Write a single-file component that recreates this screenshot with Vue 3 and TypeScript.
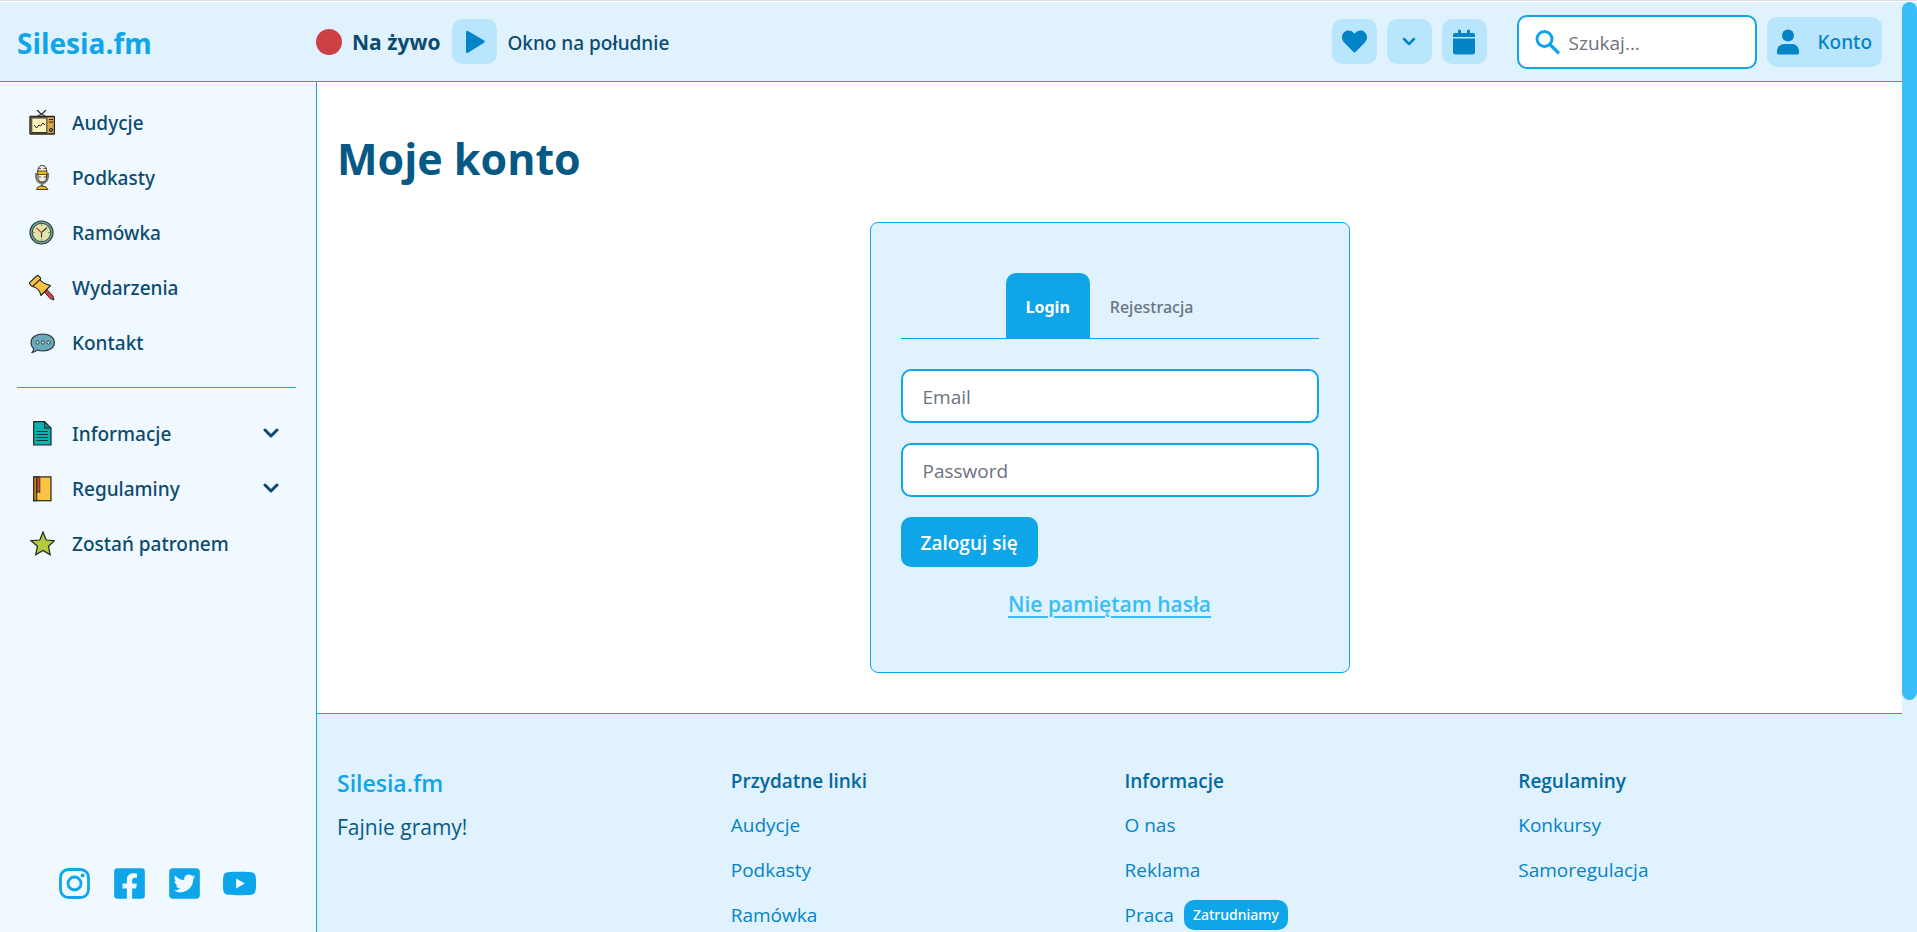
<script setup lang="ts">
import { ref } from 'vue'

interface NavItem {
  label: string
  icon: string
  expandable?: boolean
}

interface FooterLink {
  label: string
  badge?: string
}

interface FooterColumn {
  title: string
  links: FooterLink[]
}

const mainNav: NavItem[] = [
  { label: 'Audycje', icon: 'tv' },
  { label: 'Podkasty', icon: 'mic' },
  { label: 'Ramówka', icon: 'clock' },
  { label: 'Wydarzenia', icon: 'pin' },
  { label: 'Kontakt', icon: 'chat' },
]

const moreNav: NavItem[] = [
  { label: 'Informacje', icon: 'doc', expandable: true },
  { label: 'Regulaminy', icon: 'book', expandable: true },
  { label: 'Zostań patronem', icon: 'star' },
]

const navGroups = [mainNav, moreNav]

const footerColumns: FooterColumn[] = [
  {
    title: 'Przydatne linki',
    links: [{ label: 'Audycje' }, { label: 'Podkasty' }, { label: 'Ramówka' }],
  },
  {
    title: 'Informacje',
    links: [{ label: 'O nas' }, { label: 'Reklama' }, { label: 'Praca', badge: 'Zatrudniamy' }],
  },
  {
    title: 'Regulaminy',
    links: [{ label: 'Konkursy' }, { label: 'Samoregulacja' }],
  },
]

const activeTab = ref<'login' | 'register'>('login')
const search = ref('')
const email = ref('')
const password = ref('')
</script>

<template>
  <div class="window">
    <div class="app">
      <header class="topbar">
        <a class="brand" href="#">Silesia.fm</a>

        <div class="live">
          <span class="live-dot"></span>
          <strong class="live-label">Na żywo</strong>
          <button class="icon-btn" type="button" aria-label="Odtwórz">
            <svg width="26" height="26" viewBox="0 0 26 26">
              <path d="M4 3.200Q4 1 6 2L22 11.500Q23.500 12.600 22 13.700L6 23.700Q4 24.600 4 22.500Z" fill="currentColor" />
            </svg>
          </button>
          <span class="live-title">Okno na południe</span>
        </div>

        <div class="actions">
          <button class="icon-btn" type="button" aria-label="Ulubione">
            <svg width="25" height="25" viewBox="0 0 512 512">
              <path fill="currentColor" d="M462.300 62.600C407.500 15.900 326 24.300 275.700 76.200L256 96.500l-19.700-20.300C186.100 24.300 104.500 15.900 49.700 62.600c-62.800 53.600-66.100 149.800-9.900 207.900l193.500 199.800c12.500 12.900 32.800 12.900 45.300 0l193.500-199.800c56.300-58.100 53-154.300-9.800-207.900z" />
            </svg>
          </button>
          <button class="icon-btn" type="button" aria-label="Więcej">
            <svg width="14" height="10" viewBox="0 0 14 10">
              <path d="M2 2L7 7L12 2" fill="none" stroke="currentColor" stroke-width="2.500" stroke-linecap="round" stroke-linejoin="round" />
            </svg>
          </button>
          <button class="icon-btn" type="button" aria-label="Kalendarz">
            <svg width="24" height="26" viewBox="0 0 24 26">
              <path fill="currentColor" d="M1 8V6Q1 4 3 4H6V2Q6 .500 7.500 .500T9 2V4H15V2Q15 .500 16.500 .500T18 2V4H21Q23 4 23 6V8ZM1 9.500H23V23Q23 25.500 20.500 25.500H3.500Q1 25.500 1 23Z" />
            </svg>
          </button>
          <label class="search">
            <svg width="26" height="26" viewBox="0 0 26 26">
              <circle cx="9.500" cy="10" r="7.500" fill="none" stroke="currentColor" stroke-width="3" />
              <path d="M15 15.500L23 23.500" stroke="currentColor" stroke-width="3.200" stroke-linecap="round" />
            </svg>
            <input v-model="search" type="search" placeholder="Szukaj..." aria-label="Szukaj" />
          </label>
          <button class="account" type="button">
            <svg width="22" height="26" viewBox="0 0 22 26">
              <circle cx="11" cy="6.500" r="6" fill="currentColor" />
              <path fill="currentColor" d="M0 23C0 17.500 3.500 15 7.500 15H14.500C18.500 15 22 17.500 22 23V24Q22 25.500 20.500 25.500H1.500Q0 25.500 0 24Z" />
            </svg>
            Konto
          </button>
        </div>
      </header>

      <div class="body">
        <aside class="sidebar">
          <nav>
            <ul v-for="(group, g) in navGroups" :key="g" class="nav-group">
              <li v-for="item in group" :key="item.label">
                <a class="nav-link" href="#">
                  <svg v-if="item.icon === 'tv'" width="26" height="26" viewBox="0 0 26 26" stroke="#222">
                    <path d="M8 0L12.500 4.500L17 0M9 6Q12.500 3 16 6" fill="none" stroke-width="1.200" />
                    <rect x="1" y="6.500" width="24.500" height="17.500" rx=".5" fill="#d9a648" stroke-width="1.400" />
                    <rect x="2.800" y="8" width="15" height="14.500" fill="#fbf3bd" stroke-width=".9" />
                    <path d="M5 15L7.500 18L10 15L11.500 16L14 13L16 15M20 9.500H24M20 12H24" fill="none" stroke-width="1" />
                    <circle cx="22" cy="20" r="1.600" fill="#8a8a32" stroke-width="1" />
                  </svg>
                  <svg v-else-if="item.icon === 'mic'" width="26" height="26" viewBox="0 1 26 26" stroke="#333">
                    <path d="M7 9V13Q8 19 13 19T19 13V9" fill="none" stroke="#777" stroke-width="2" />
                    <path d="M13 19V23" stroke="#777" stroke-width="2.500" />
                    <rect x="9" y="1.500" width="8.500" height="16.500" rx="4.200" fill="#f6ead0" />
                    <rect x="8.500" y="7" width="9.500" height="3.500" fill="#f0b80c" stroke-width=".8" />
                    <path d="M10 4.500H12M14.500 4.500H17M10 13H12M14.500 13H17" stroke-width=".8" />
                    <path d="M7.500 25.500Q8 22 13 22T19 25.500Z" fill="#f3b90a" stroke-width=".9" />
                  </svg>
                  <svg v-else-if="item.icon === 'clock'" width="26" height="26" viewBox="0 0 26 26" stroke="#333">
                    <circle cx="12.500" cy="12.500" r="11.500" fill="#64ad9b" stroke-width="1.200" />
                    <circle cx="12.500" cy="12.500" r="9.200" fill="#e2e2aa" stroke-width=".9" />
                    <path d="M12.500 12.500L18 7.500M12.500 12.500V17.500M12.500 4.500V5.500M12.500 19.500V20.500M4.500 12.500H5.500M19.500 12.500H20.500" fill="none" stroke-width="1.100" />
                    <path d="M12.500 12.500L7.500 8" stroke="#d34c38" stroke-width="1.300" />
                  </svg>
                  <svg v-else-if="item.icon === 'pin'" width="26" height="26" viewBox="0 0 26 26" stroke="#222" stroke-linejoin="round">
                    <path d="M15.500 17L18 14.500L24 21L25 25L21 23.500Z" fill="#d8423d" stroke-width=".9" />
                    <path d="M3.500 11.500L10.500 4Q13 8.500 21.500 10.500L12 20.500Q10.500 13 3.500 11.500Z" fill="#fcc343" stroke-width="1.100" />
                    <rect x="0" y="3.400" width="12" height="4.800" rx="1.200" transform="rotate(-43 6 5.800)" fill="#fcc343" stroke-width="1.100" />
                  </svg>
                  <svg v-else-if="item.icon === 'chat'" width="26" height="26" viewBox="0 0 26 26" stroke="#333">
                    <path d="M14 4C20 4 25.300 7 25.300 12.500S20 21 14 21C11 21 9.500 20.500 8 20Q6 22.500 3.200 22.500Q5 20.500 4.500 18.500Q2 16 2 12.500C2 7 7.500 4 14 4Z" fill="#67aabe" stroke-width="1.200" />
                    <g fill="#e8e3c0" stroke-width=".9">
                      <circle cx="8.500" cy="12.500" r="1.600" />
                      <circle cx="14" cy="12.500" r="1.600" />
                      <circle cx="19.500" cy="12.500" r="1.600" />
                    </g>
                  </svg>
                  <svg v-else-if="item.icon === 'doc'" width="26" height="26" viewBox="0 0 26 26" stroke="#222">
                    <path d="M4.700 .700H15.500L22 7V24H4.700Z" fill="#07b3ae" stroke-width="1.200" />
                    <path d="M15.500 .700V7H22Z" fill="#078f8c" stroke-width="1" />
                    <path d="M7.500 10.500H19M7.500 13.500H19M7.500 16.500H19M7.500 19.500H19" stroke-width=".9" />
                  </svg>
                  <svg v-else-if="item.icon === 'book'" width="26" height="26" viewBox="0 0 26 26" stroke="#222">
                    <rect x="4.700" y=".9" width="17.300" height="23.800" fill="#fcc343" stroke-width="1.200" />
                    <rect x="4.700" y=".9" width="3" height="23.800" fill="#c98408" stroke-width="1" />
                    <path d="M8 .9H10.800V17L9.400 15L8 17Z" fill="#d9483b" stroke-width=".8" />
                  </svg>
                  <svg v-else width="26" height="26" viewBox="0 0 26 26" stroke="#222">
                    <path d="M14 1L17.200 9L25.500 9.700L19.500 15.300L21.200 23.800L14 19.500L6.600 23.800L8.500 15.300L2 9.700L10.800 9Z" fill="#b4cb40" stroke-width="1.200" />
                  </svg>
                  <span>{{ item.label }}</span>
                  <svg v-if="item.expandable" class="chevron" width="16" height="12" viewBox="0 0 16 12">
                    <path d="M2 2L8 8L14 2" fill="none" stroke="currentColor" stroke-width="3" stroke-linecap="round" stroke-linejoin="round" />
                  </svg>
                </a>
              </li>
            </ul>
          </nav>

          <div class="social">
            <a href="#" aria-label="Instagram">
              <svg width="35" height="35" viewBox="0 0 35 35">
                <rect x="3.500" y="3.500" width="28" height="28" rx="8" fill="none" stroke="currentColor" stroke-width="2.800" />
                <circle cx="17.500" cy="17.500" r="6.500" fill="none" stroke="currentColor" stroke-width="2.800" />
                <circle cx="25.600" cy="9.400" r="1.900" fill="currentColor" />
              </svg>
            </a>
            <a href="#" aria-label="Facebook">
              <svg width="35" height="35" viewBox="-32 0 512 512">
                <path fill="currentColor" d="M400 32H48A48 48 0 0 0 0 80v352a48 48 0 0 0 48 48h137.250V327.690h-63V256h63v-54.640c0-62.150 37-96.480 93.670-96.480 27.140 0 55.520 4.840 55.520 4.840v61h-31.270c-30.810 0-40.420 19.120-40.420 38.730V256h68.780l-11 71.690h-57.780V480H400a48 48 0 0 0 48-48V80a48 48 0 0 0-48-48z" />
              </svg>
            </a>
            <a href="#" aria-label="Twitter">
              <svg width="35" height="35" viewBox="-32 0 512 512">
                <path fill="currentColor" d="M400 32H48C21.500 32 0 53.500 0 80v352c0 26.500 21.500 48 48 48h352c26.500 0 48-21.500 48-48V80c0-26.500-21.500-48-48-48zm-48.900 158.800c.2 2.800.2 5.700.2 8.500 0 86.700-66 186.600-186.600 186.600-37.200 0-71.700-10.800-100.700-29.400 5.300.6 10.400.8 15.800.8 30.700 0 58.900-10.400 81.400-28-28.800-.6-53-19.500-61.300-45.500 10.100 1.500 19.200 1.500 29.600-1.200-30-6.100-52.500-32.500-52.500-64.400v-.8c8.700 4.900 18.900 7.900 29.600 8.300a65.447 65.447 0 0 1-29.200-54.600c0-12.200 3.200-23.400 8.900-33.100 32.300 39.800 80.800 65.800 135.200 68.600-9.300-44.500 24-80.600 64-80.600 18.900 0 35.900 7.900 47.900 20.700 14.800-2.800 29-8.300 41.600-15.800-4.900 15.200-15.200 28-28.800 36.100 13.200-1.400 26-5.100 37.800-10.200-8.900 13.100-20.100 24.700-32.900 34z" />
              </svg>
            </a>
            <a href="#" aria-label="YouTube">
              <svg width="35" height="35" viewBox="0 -32 576 576">
                <path fill="currentColor" d="M549.655 124.083c-6.281-23.650-24.787-42.276-48.284-48.597C458.781 64 288 64 288 64S117.220 64 74.629 75.486c-23.497 6.322-42.003 24.947-48.284 48.597-11.412 42.867-11.412 132.305-11.412 132.305s0 89.438 11.412 132.305c6.281 23.650 24.787 41.500 48.284 47.821C117.220 448 288 448 288 448s170.780 0 213.371-11.486c23.497-6.321 42.003-24.171 48.284-47.821 11.412-42.867 11.412-132.305 11.412-132.305s0-89.438-11.412-132.305zm-317.510 213.508V175.185l142.739 81.205-142.739 81.201z" />
              </svg>
            </a>
          </div>
        </aside>

        <div class="content">
          <main class="main">
            <h1>Moje konto</h1>
            <section class="card">
              <div class="tabs" role="tablist">
                <button
                  class="tab"
                  :class="{ active: activeTab === 'login' }"
                  type="button"
                  role="tab"
                  :aria-selected="activeTab === 'login'"
                  @click="activeTab = 'login'"
                >Login</button>
                <button
                  class="tab"
                  :class="{ active: activeTab === 'register' }"
                  type="button"
                  role="tab"
                  :aria-selected="activeTab === 'register'"
                  @click="activeTab = 'register'"
                >Rejestracja</button>
              </div>
              <form class="form" @submit.prevent>
                <input v-model="email" class="field" type="email" placeholder="Email" aria-label="Email" />
                <input v-model="password" class="field" type="password" placeholder="Password" aria-label="Password" />
                <button class="submit" type="submit">Zaloguj się</button>
                <a class="forgot" href="#">Nie pamiętam hasła</a>
              </form>
            </section>
          </main>

          <footer class="footer">
            <div class="about">
              <strong>Silesia.fm</strong>
              <p>Fajnie gramy!</p>
            </div>
            <div v-for="column in footerColumns" :key="column.title" class="column">
              <h2>{{ column.title }}</h2>
              <ul>
                <li v-for="link in column.links" :key="link.label">
                  <a href="#">{{ link.label }}</a>
                  <span v-if="link.badge" class="badge">{{ link.badge }}</span>
                </li>
              </ul>
            </div>
          </footer>
        </div>
      </div>
    </div>
    <div class="scroll-track" aria-hidden="true"><div class="scroll-thumb"></div></div>
  </div>
</template>

<style>
html,
body {
  margin: 0;
  overflow: hidden;
}
</style>

<style scoped>
* {
  box-sizing: border-box;
}

.window {
  display: flex;
  height: 100vh;
  padding-top: 1px;
  border-top: 1px solid #d9dde1;
  overflow: hidden;
  background: #fff;
  color: #0c4a6e;
  font-family: 'Open Sans', 'Noto Sans', sans-serif;
  font-size: 19px;
  line-height: 30px;
}

.app {
  display: flex;
  flex: 1;
  flex-direction: column;
  min-width: 0;
}

button,
input {
  font: inherit;
}

button {
  padding: 0;
  border: 0;
  cursor: pointer;
}

a {
  color: inherit;
  text-decoration: none;
}

svg {
  flex: none;
  display: block;
}

ul {
  margin: 0;
  padding: 0;
  list-style: none;
}

.topbar {
  display: flex;
  flex: none;
  align-items: center;
  height: 80px;
  padding: 0 20px 0 17px;
  border-bottom: 1px solid #0ea5e9;
  background: #e0f2fe;
}

.brand {
  width: 299px;
  padding-top: 2px;
  color: #0ea5e9;
  font-size: 28px;
  font-weight: 700;
}

.live,
.actions {
  display: flex;
  align-items: center;
  gap: 10px;
}

.live-dot {
  width: 26px;
  height: 26px;
  border-radius: 50%;
  background: #cb4144;
}

.live-label {
  margin-right: 2px;
  font-size: 21px;
  font-weight: 700;
}

/* The medium weight comes from Noto Sans, which ships one. */
.live-title,
.account,
.nav-link,
.tab,
.badge {
  font-family: 'Noto Sans', 'Open Sans', sans-serif;
  font-weight: 500;
}

.live-title {
  padding-top: 2px;
}

.icon-btn {
  display: flex;
  align-items: center;
  justify-content: center;
  width: 45px;
  height: 45px;
  border-radius: 10px;
  background: #bae6fd;
  color: #0284c7;
}

.actions {
  margin-left: auto;
}

.search {
  display: flex;
  align-items: center;
  gap: 8px;
  width: 240px;
  height: 54px;
  margin-left: 20px;
  padding: 0 16px;
  border: 2px solid #0ea5e9;
  border-radius: 10px;
  background: #fff;
  color: #0ea5e9;
}

.search input {
  flex: 1;
  min-width: 0;
  padding: 2px 0 0;
  border: 0;
  outline: 0;
  background: none;
}

::placeholder {
  color: #6b7280;
  opacity: 1;
}

.account {
  display: flex;
  align-items: center;
  gap: 19px;
  height: 50px;
  padding: 0 10px;
  border-radius: 10px;
  background: #bae6fd;
  color: #0284c7;
}

.body {
  display: flex;
  flex: 1;
  min-height: 0;
}

.sidebar {
  display: flex;
  flex: none;
  flex-direction: column;
  justify-content: space-between;
  width: 317px;
  padding: 13px 20px 31px 17px;
  border-right: 1px solid #0ea5e9;
  background: #f0f9ff;
}

.nav-group + .nav-group {
  margin-top: 17px;
  padding-top: 18px;
  border-top: 1px solid #0ea5e9;
}

.nav-link {
  display: flex;
  align-items: center;
  gap: 17px;
  height: 55px;
  padding: 0 17px 0 12px;
}

.chevron {
  margin-left: auto;
}

.social {
  display: flex;
  justify-content: center;
  gap: 20px;
  color: #0ea5e9;
}

.content {
  flex: 1;
  min-width: 0;
  overflow: hidden;
}

.main {
  padding: 40px 20px;
}

h1 {
  margin: 0 0 26px;
  color: #075985;
  font-size: 43px;
  font-weight: 700;
  line-height: 74px;
}

.card {
  width: 480px;
  margin: 0 auto;
  padding: 50px 30px;
  border: 1px solid #0ea5e9;
  border-radius: 8px;
  background: #e0f2fe;
}

.tabs {
  display: flex;
  justify-content: center;
  margin-bottom: 30px;
  border-bottom: 1px solid #0ea5e9;
}

.tab {
  height: 65px;
  padding: 2px 20px 0;
  border-radius: 10px 10px 0 0;
  background: none;
  color: #6b7280;
  font-size: 16px;
}

.tab.active {
  background: #0ea5e9;
  color: #fff;
  font-weight: 700;
}

.form {
  display: flex;
  flex-direction: column;
  align-items: flex-start;
  gap: 20px;
}

.field {
  width: 100%;
  height: 54px;
  padding: 2px 20px 0;
  border: 2px solid #0ea5e9;
  border-radius: 10px;
  background: #fff;
  color: #0c4a6e;
}

.submit {
  height: 50px;
  padding: 2px 20px 0;
  border-radius: 10px;
  background: #0ea5e9;
  color: #fff;
  font-weight: 600;
}

.forgot {
  align-self: center;
  color: #38bdf8;
  font-size: 21px;
  font-weight: 600;
  line-height: 35px;
  text-decoration: underline;
  text-decoration-thickness: 2px;
  text-underline-offset: 4px;
}

.footer {
  display: grid;
  grid-template-columns: repeat(4, 1fr);
  gap: 30px;
  padding: 47px 20px;
  border-top: 1px solid #0ea5e9;
  background: #e0f2fe;
}

.about strong {
  display: block;
  color: #0ea5e9;
  font-size: 23px;
  font-weight: 600;
  line-height: 44px;
}

.about p {
  margin: 0;
  color: #075985;
  font-size: 21px;
  line-height: 45px;
}

.column h2 {
  margin: 0;
  color: #0369a1;
  font-size: 19px;
  font-weight: 600;
  line-height: 41px;
}

.column li {
  display: flex;
  align-items: center;
  gap: 10px;
  height: 45px;
  color: #0284c7;
}

.badge {
  padding: 0 9px;
  border-radius: 10px;
  background: #0ea5e9;
  color: #fff;
  font-size: 14px;
}

.scroll-track {
  flex: none;
  width: 15px;
  background: #e0f2fe;
}

.scroll-thumb {
  height: 75%;
  border-radius: 8px;
  background: #38bdf8;
}
</style>
